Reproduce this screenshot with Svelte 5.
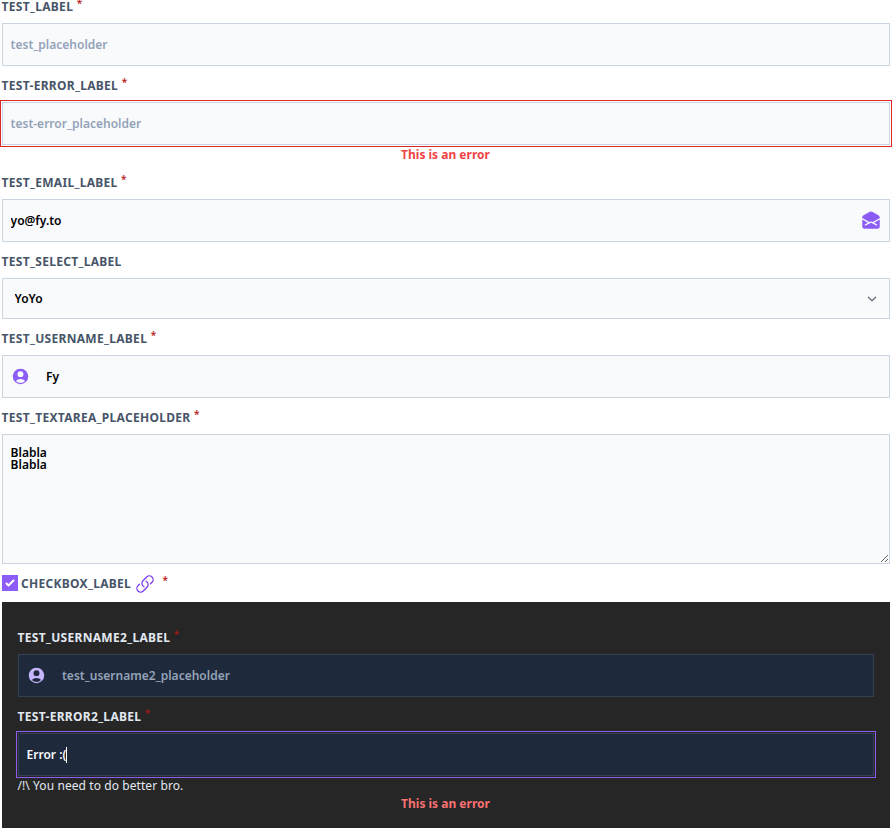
<script>
  let name = $state('');
  let failing = $state('');
  let email = $state('yo@fy.to');
  let choice = $state('YoYo');
  let username = $state('Fy');
  let message = $state('Blabla\nBlabla');
  let accepted = $state(true);
  let username2 = $state('');
  let error2 = $state('Error :(');
</script>

{#snippet label(id, text, required = true)}
  <label class="label" for={id}>{text}{#if required}<span class="star">*</span>{/if}</label>
{/snippet}

{#snippet userIcon()}
  <svg class="user" viewBox="0 0 24 24" aria-hidden="true">
    <path fill="currentColor" fill-rule="evenodd" clip-rule="evenodd" d="M18.685 19.097A9.723 9.723 0 0 0 21.75 12c0-5.385-4.365-9.75-9.75-9.75S2.25 6.615 2.25 12a9.723 9.723 0 0 0 3.065 7.097A9.716 9.716 0 0 0 12 21.75a9.716 9.716 0 0 0 6.685-2.653Zm-12.54-1.285A7.486 7.486 0 0 1 12 15a7.486 7.486 0 0 1 5.855 2.812A8.224 8.224 0 0 1 12 20.25a8.224 8.224 0 0 1-5.855-2.438ZM15.75 9a3.75 3.75 0 1 1-7.5 0 3.75 3.75 0 0 1 7.5 0Z" />
  </svg>
{/snippet}

<main>
  <div class="field">
    {@render label('test', 'test_label')}
    <div class="control"><input id="test" placeholder="test_placeholder" bind:value={name} /></div>
  </div>

  <div class="field">
    {@render label('test-error', 'test-error_label')}
    <div class="control invalid"><input id="test-error" placeholder="test-error_placeholder" bind:value={failing} /></div>
    <p class="error">This is an error</p>
  </div>

  <div class="field">
    {@render label('email', 'test_email_label')}
    <div class="control">
      <input id="email" bind:value={email} />
      <svg class="mail" viewBox="0 0 24 24" aria-hidden="true">
        <path fill="currentColor" d="M19.5 22.5a3 3 0 0 0 3-3v-8.174l-6.879 4.022 3.485 1.876a.75.75 0 1 1-.712 1.321l-5.683-3.06a1.5 1.5 0 0 0-1.422 0l-5.683 3.06a.75.75 0 0 1-.712-1.32l3.485-1.877L1.5 11.326V19.5a3 3 0 0 0 3 3h15Z" />
        <path fill="currentColor" d="M1.5 9.589v-.745a3 3 0 0 1 1.578-2.642l7.5-4.038a3 3 0 0 1 2.844 0l7.5 4.038A3 3 0 0 1 22.5 8.844v.745l-8.426 4.926-.652-.351a3 3 0 0 0-2.844 0l-.652.351L1.5 9.589Z" />
      </svg>
    </div>
  </div>

  <div class="field">
    {@render label('select', 'test_select_label', false)}
    <div class="control select">
      <select id="select" bind:value={choice}><option>YoYo</option></select>
      <svg class="chevron" viewBox="0 0 20 20" aria-hidden="true">
        <path d="M6 8l4 4 4-4" fill="none" stroke="#6b7280" stroke-width="1.5" stroke-linecap="round" stroke-linejoin="round" />
      </svg>
    </div>
  </div>

  <div class="field">
    {@render label('username', 'test_username_label')}
    <div class="control leading">
      {@render userIcon()}
      <input id="username" bind:value={username} />
    </div>
  </div>

  <div class="field">
    {@render label('textarea', 'test_textarea_placeholder')}
    <textarea id="textarea" spellcheck="false" bind:value={message}></textarea>
  </div>

  <div class="check-row">
    <input id="accept" type="checkbox" bind:checked={accepted} />
    <label class="label" for="accept">checkbox_label</label>
    <svg class="link" viewBox="0 0 24 24" aria-hidden="true">
      <path fill="none" stroke="currentColor" stroke-width="1.5" stroke-linecap="round" stroke-linejoin="round" d="M13.19 8.688a4.5 4.5 0 0 1 1.242 7.244l-4.5 4.5a4.5 4.5 0 0 1-6.364-6.364l1.757-1.757m13.35-.622 1.757-1.757a4.5 4.5 0 0 0-6.364-6.364l-4.5 4.5a4.5 4.5 0 0 0 1.242 7.244" />
    </svg>
    <span class="label"><span class="star">*</span></span>
  </div>

  <section class="dark">
    <div class="field">
      {@render label('username2', 'test_username2_label')}
      <div class="control leading">
        {@render userIcon()}
        <input id="username2" placeholder="test_username2_placeholder" bind:value={username2} />
      </div>
    </div>
    <div class="field">
      {@render label('test-error2', 'test-error2_label')}
      <div class="control focused">
        <input id="test-error2" bind:value={error2} />
        <span class="caret"></span>
      </div>
      <p class="help">/!\ You need to do better bro.</p>
      <p class="error">This is an error</p>
    </div>
  </section>
</main>

<style>
  :global(body) { background: #fff; overflow: hidden; }
  main {
    box-sizing: border-box;
    height: 828px;
    overflow: hidden;
    padding: 0 2px;
    font: 600 12px/16px "Noto Sans", sans-serif;
    color: #000;
  }
  main > .field:first-child { margin-top: -2px; }
  .field { display: flex; flex-direction: column; margin-bottom: 11px; }
  .label {
    display: block;
    box-sizing: border-box;
    height: 16px;
    margin-bottom: 9px;
    padding-top: 1px;
    font-size: 12px;
    font-weight: 700;
    letter-spacing: 0.3px;
    text-indent: -0.4px;
    text-transform: uppercase;
    color: #475569;
  }
  .star { margin-left: 3.5px; font-size: 10px; font-weight: 600; color: #b91c1c; position: relative; top: -4px; line-height: 0; }
  .control {
    position: relative;
    display: flex;
    align-items: center;
    box-sizing: border-box;
    height: 43px;
    border: 1px solid #cbd5e1;
    background: #f8fafc;
  }
  .control input, select {
    flex: 1;
    min-width: 0;
    height: 100%;
    box-sizing: border-box;
    padding: 0 7.6px;
    border: 0;
    margin: 0;
    outline: 0;
    border-radius: 0;
    background: transparent;
    font: inherit;
    color: inherit;
  }
  input::placeholder { color: #94a3b8; opacity: 1; }
  .invalid { outline: 1px solid #dc2626; outline-offset: 1px; }
  .select { height: 41px; }
  select { appearance: none; padding: 0 11.5px; }
  .chevron { width: 18px; height: 18px; margin-right: 8px; }
  .mail { width: 20px; height: 20px; margin: 0 8px 1px 0; color: #8b5cf6; }
  .user { width: 19px; height: 19px; margin-left: 8px; color: #8b5cf6; }
  .control.leading input { padding-left: 16px; }
  .error { margin: 0; padding: 1px 1px 0 0; text-align: center; font-weight: 700; line-height: 17px; color: #ef4444; }
  textarea {
    box-sizing: border-box;
    display: block;
    width: 100%;
    height: 130px;
    margin: 0;
    padding: 12px 7.6px;
    border: 1px solid #cbd5e1;
    outline: 0;
    background: #f8fafc;
    color: #000;
    font: 600 12px/12px "Noto Sans", sans-serif;
    resize: vertical;
  }
  .check-row { display: flex; align-items: center; height: 16px; }
  .check-row .label { margin: 0; text-indent: 0; }
  .check-row input {
    appearance: none;
    width: 16px;
    height: 16px;
    margin: 0 3px 0 0;
    background: #8b5cf6 url("data:image/svg+xml,%3Csvg viewBox='0 0 16 16' fill='white' xmlns='http://www.w3.org/2000/svg'%3E%3Cpath d='M12.207 4.793a1 1 0 0 1 0 1.414l-5 5a1 1 0 0 1-1.414 0l-2-2a1 1 0 0 1 1.414-1.414L6.5 9.086l4.293-4.293a1 1 0 0 1 1.414 0z'/%3E%3C/svg%3E") center / 100%;
  }
  .link { width: 20px; height: 20px; margin: 1px 4.5px 0 3.5px; color: #7c3aed; }
  .dark {
    box-sizing: border-box;
    height: 226px;
    margin-top: 11px;
    padding: 27px 16px 0;
    background: #262626;
    color: #f8fafc;
  }
  .dark .label { color: #e2e8f0; }
  .dark .star { color: #991b1b; }
  .dark .control { background: #1e293b; border-color: #334155; }
  .dark .user { color: #c4b5fd; }
  .dark .focused { outline: 1px solid #8b5cf6; outline-offset: 1px; }
  .dark .error { padding: 0 1px 0 0; line-height: 20px; color: #f87171; }
  .caret { position: absolute; left: 47px; top: 13px; width: 1px; height: 16px; background: #fff; }
  .help { margin: 0; padding-top: 1px; font-weight: 400; letter-spacing: 0.08px; line-height: 17px; text-indent: -0.5px; color: #e2e8f0; }
</style>
